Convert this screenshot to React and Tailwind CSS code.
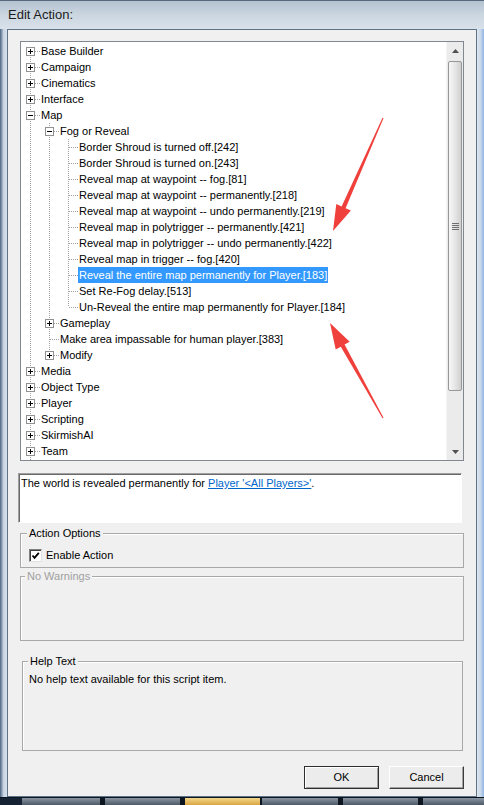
import React from 'react';

const tree = [
  { t: 'Base Builder', c: true },
  { t: 'Campaign', c: true },
  { t: 'Cinematics', c: true },
  { t: 'Interface', c: true },
  {
    t: 'Map',
    open: true,
    kids: [
      {
        t: 'Fog or Reveal',
        open: true,
        kids: [
          { t: 'Border Shroud is turned off.[242]' },
          { t: 'Border Shroud is turned on.[243]' },
          { t: 'Reveal map at waypoint -- fog.[81]' },
          { t: 'Reveal map at waypoint -- permanently.[218]' },
          { t: 'Reveal map at waypoint -- undo permanently.[219]' },
          { t: 'Reveal map in polytrigger -- permanently.[421]' },
          { t: 'Reveal map in polytrigger -- undo permanently.[422]' },
          { t: 'Reveal map in trigger -- fog.[420]' },
          { t: 'Reveal the entire map permanently for Player.[183]', sel: true },
          { t: 'Set Re-Fog delay.[513]' },
          { t: 'Un-Reveal the entire map permanently for Player.[184]' },
        ],
      },
      { t: 'Gameplay', c: true },
      { t: 'Make area impassable for human player.[383]' },
      { t: 'Modify', c: true },
    ],
  },
  { t: 'Media', c: true },
  { t: 'Object Type', c: true },
  { t: 'Player', c: true },
  { t: 'Scripting', c: true },
  { t: 'SkirmishAI', c: true },
  // more categories sit below, scrolled out of view
  { t: 'Team', c: true, more: true },
];

const flatten = (nodes, level = 0, guides = [], out = []) => {
  nodes.forEach((node, i) => {
    const isLast = i === nodes.length - 1 && !node.more;
    out.push({ node, level, guides, isLast, first: level === 0 && i === 0 });
    if (node.open) flatten(node.kids, level + 1, [...guides, !isLast], out);
  });
  return out;
};

const rows = flatten(tree);

const dot = { stroke: '#a0a0a0', strokeDasharray: '1 1' };

const Guide = ({ on }) => (
  <svg width="19" height="16" className="shrink-0" shapeRendering="crispEdges">
    {on && <line x1="9.5" y1="0" x2="9.5" y2="16" {...dot} />}
  </svg>
);

const Connector = ({ row }) => {
  const box = row.node.c || row.node.open;
  return (
    <svg width="19" height="16" className="shrink-0" shapeRendering="crispEdges">
      {!row.first && <line x1="9.5" y1="0" x2="9.5" y2="8" {...dot} />}
      {!row.isLast && <line x1="9.5" y1="8" x2="9.5" y2="16" {...dot} />}
      <line x1="10" y1="8.5" x2="19" y2="8.5" {...dot} />
      {box && (
        <g>
          <rect x="5.5" y="4.5" width="8" height="8" fill="#fff" stroke="#919191" />
          <line x1="7" y1="8.5" x2="12" y2="8.5" stroke="#000" />
          {row.node.c && <line x1="9.5" y1="6" x2="9.5" y2="11" stroke="#000" />}
        </g>
      )}
    </svg>
  );
};

const ScrollBar = () => (
  <div className="w-[17px] shrink-0 flex flex-col bg-[#ebebeb] border-l border-[#f5f5f5]">
    <div className="h-[17px] flex items-center justify-center">
      <svg width="7" height="4"><polygon points="0,4 3.5,0 7,4" fill="#505050" /></svg>
    </div>
    <div className="flex-1 pt-[2px] pl-[1px]">
      <div className="w-[14px] h-[330px] rounded-[2px] border border-[#979797] bg-linear-to-r from-[#f7f7f7] via-[#e6e6e6] to-[#cfcfcf] flex flex-col items-center justify-center gap-[1px]">
        <div className="w-[7px] h-[1px] bg-[#6e6e6e]" />
        <div className="w-[7px] h-[1px] bg-[#6e6e6e]" />
        <div className="w-[7px] h-[1px] bg-[#6e6e6e]" />
        <div className="w-[7px] h-[1px] bg-[#6e6e6e]" />
      </div>
    </div>
    <div className="h-[17px] flex items-center justify-center">
      <svg width="7" height="4"><polygon points="0,0 7,0 3.5,4" fill="#505050" /></svg>
    </div>
  </div>
);

const GroupBox = ({ label, disabled, className, children }) => (
  <div className={`relative border border-[#a8a8a8] shadow-[inset_1px_1px_0_#fff] ${className}`}>
    <span
      className={`absolute -top-[8px] bg-[#f0f0f0] px-[2px] leading-[14px] ${
        disabled ? 'text-[#a0a0a0]' : 'text-black'
      } ${label === 'Action Options' ? 'left-[6px]' : label === 'Help Text' ? 'left-[5px]' : 'left-[4px]'}`}
    >
      {label}
    </span>
    {children}
  </div>
);

const taskbar = [
  ['w-[22px]', 'bg-[#142233]'],
  ['w-[78px]', 'bg-linear-to-b from-[#8a96a3] to-[#4e5a66]'],
  ['w-[5px]', 'bg-[#0c1520]'],
  ['w-[75px]', 'bg-linear-to-b from-[#8a96a3] to-[#4e5a66]'],
  ['w-[5px]', 'bg-[#0c1520]'],
  ['w-[75px]', 'bg-linear-to-b from-[#f3d98a] to-[#d9a441]'],
  ['w-[2px]', 'bg-[#0c1520]'],
  ['w-[76px]', 'bg-linear-to-b from-[#8a96a3] to-[#4e5a66]'],
  ['w-[5px]', 'bg-[#0c1520]'],
  ['w-[75px]', 'bg-linear-to-b from-[#8a96a3] to-[#4e5a66]'],
  ['w-[5px]', 'bg-[#0c1520]'],
  ['flex-1', 'bg-linear-to-b from-[#8a96a3] to-[#4e5a66]'],
];

export default function App() {
  return (
    <div className="relative w-[484px] h-[805px] overflow-hidden flex flex-col bg-[#c3d1df] font-['Liberation_Sans',Arial,sans-serif] text-[11px] text-black">
      {/* title bar */}
      <div className="h-[29px] shrink-0 flex items-center pl-[8px] bg-linear-to-b from-[#b4c2d0] via-[#cbd6e0] to-[#d9e1ea] border-t border-[#56697e]">
        <span className="text-[13px] text-[#1b1b1b]">Edit Action:</span>
      </div>

      <div className="h-[768px] shrink-0 flex">
        <div className="w-[7px] shrink-0 bg-linear-to-r from-[#4c6480] via-[#c6d4e2] to-[#d7e1ea]" />

        {/* client */}
        <div className="w-[470px] shrink-0 border border-[#5f7388] bg-[#f0f0f0] flex flex-col">
          {/* tree */}
          <div className="ml-[12px] mt-[11px] w-[444px] h-[420px] shrink-0 border border-[#828790] bg-white flex">
            <div className="flex-1 overflow-hidden pt-[1px]">
              {rows.map((row, i) => (
                <div key={i} className="flex h-4">
                  {row.guides.map((on, k) => (
                    <Guide key={k} on={on} />
                  ))}
                  <Connector row={row} />
                  <span
                    className={`px-[1px] leading-4 whitespace-nowrap ${
                      row.node.sel ? 'bg-[#3399ff] text-white' : ''
                    }`}
                  >
                    {row.node.t}
                  </span>
                </div>
              ))}
              {/* dotted trunk continues to the rows below */}
              <svg width="19" height="2" className="block" shapeRendering="crispEdges">
                <line x1="9.5" y1="0" x2="9.5" y2="2" {...dot} />
              </svg>
            </div>
            <ScrollBar />
          </div>

          {/* description */}
          <div className="ml-[10px] mt-[12px] w-[444px] h-[50px] shrink-0 bg-white border border-t-[#a0a0a0] border-l-[#a0a0a0] border-r-white border-b-white shadow-[inset_1px_1px_0_#696969] pl-[2px] pt-[2px] leading-[14px]">
            The world is revealed permanently for{' '}
            <span className="text-[#0066cc] underline">Player '&lt;All Players&gt;'</span>.
          </div>

          <GroupBox label="Action Options" className="ml-[12px] mt-[10px] w-[444px] h-[35px] shrink-0 pl-[8px] pt-[14px]">
            <div className="flex items-center">
              <div className="w-[13px] h-[13px] bg-white border border-t-[#808080] border-l-[#808080] border-r-[#e0e0e0] border-b-[#e0e0e0] shadow-[inset_1px_1px_0_#404040] flex items-center justify-center">
                <svg width="9" height="9">
                  <path d="M1.5 4.5 L3.5 6.8 L7.8 1.8" fill="none" stroke="#000" strokeWidth="1.8" />
                </svg>
              </div>
              <span className="ml-[4px] leading-[14px]">Enable Action</span>
            </div>
          </GroupBox>

          <GroupBox label="No Warnings" disabled className="ml-[12px] mt-[8px] w-[444px] h-[65px] shrink-0" />

          <GroupBox label="Help Text" className="ml-[14px] mt-[20px] w-[441px] h-[90px] shrink-0 pl-[6px] pt-[10px]">
            <p className="leading-[14px]">No help text available for this script item.</p>
          </GroupBox>

          <div className="mt-[15px] mr-[12px] flex justify-end gap-[10px]">
            <button className="w-[75px] h-[23px] border border-[#2e2e2e] bg-[#ececec] shadow-[inset_1px_1px_0_#fff,inset_-1px_-1px_0_#a0a0a0] text-[11px]">
              OK
            </button>
            <button className="w-[75px] h-[23px] border border-t-white border-l-white border-r-[#3c3c3c] border-b-[#3c3c3c] bg-[#ececec] shadow-[inset_-1px_-1px_0_#a0a0a0] text-[11px]">
              Cancel
            </button>
          </div>
        </div>

        <div className="w-[7px] shrink-0 bg-linear-to-r from-[#dfe6ed] via-[#c9d9ea] to-[#8fb6e3]" />
      </div>

      {/* taskbar peeking below */}
      <div className="h-[8px] shrink-0 flex border-t border-[#0c1520]">
        {taskbar.map(([w, bg], i) => (
          <div key={i} className={`${w} ${bg}`} />
        ))}
      </div>

      {/* red annotation arrows */}
      <svg className="absolute inset-0 pointer-events-none" width="484" height="805">
        <polygon
          points="383.5,118.2 345.6,208.2 350.9,210.6 333,231 336.3,204 341.6,206.4 382.5,117.8"
          fill="#f0403c"
        />
        <polygon
          points="383.5,417.7 344.6,344.6 349.7,341.8 330,323 335.7,349.6 340.8,346.8 382.5,418.3"
          fill="#f0403c"
        />
      </svg>
    </div>
  );
}
